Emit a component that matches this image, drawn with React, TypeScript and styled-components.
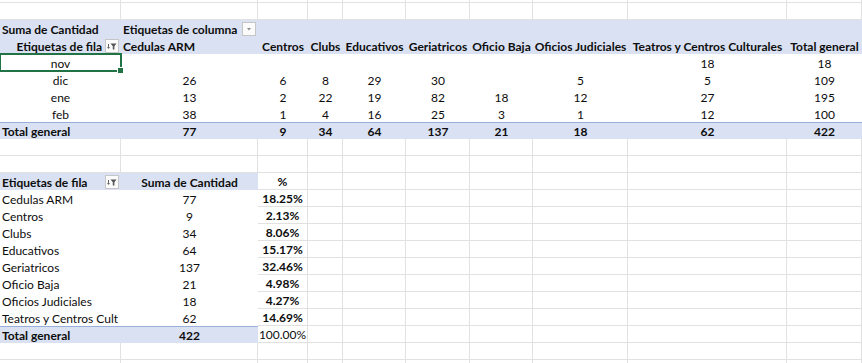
import React from "react";
import styled, { createGlobalStyle, css } from "styled-components";

const GlobalStyle = createGlobalStyle`
  body {
    margin: 0;
    background: #ffffff;
    overflow: hidden;
  }
`;

const COL_WIDTHS = [121, 137, 50, 35, 63, 64, 63, 95, 159, 75];
const GRID_LINE = "#e1e1e1";
const BAND = "#d9e1f2";

const Sheet = styled.div`
  display: grid;
  grid-template-columns: ${COL_WIDTHS.map((w) => `${w}px`).join(" ")};
  grid-template-rows: 3px repeat(22, 17px);
  font-family: "Lato", "Liberation Sans", sans-serif;
  font-size: 12px;
  color: #0d0d0d;
`;

type Align = "left" | "center" | "right";

interface CellProps {
  $align?: Align;
  $bold?: boolean;
  $band?: boolean;
  $grid?: boolean;
  $topLine?: boolean;
  $clip?: boolean;
  $selected?: boolean;
}

const justify = (a?: Align) =>
  a === "center" ? "center" : a === "right" ? "flex-end" : "flex-start";

const Cell = styled.div<CellProps>`
  box-sizing: border-box;
  display: flex;
  align-items: center;
  justify-content: ${({ $align }) => justify($align)};
  padding: 1px 2px 0;
  white-space: nowrap;
  font-weight: ${({ $bold }) => ($bold ? 700 : 400)};
  background: ${({ $band }) => ($band ? BAND : "#ffffff")};
  border-right: ${({ $grid }) => ($grid ? `1px solid ${GRID_LINE}` : "none")};
  border-bottom: ${({ $grid }) => ($grid ? `1px solid ${GRID_LINE}` : "none")};
  border-top: ${({ $topLine }) => ($topLine ? "1px solid #98afdc" : "none")};
  overflow: ${({ $clip }) => ($clip ? "hidden" : "visible")};
  ${({ $selected }) =>
    $selected &&
    css`
      position: relative;
      outline: 2px solid #217346;
      outline-offset: -1px;
      &::after {
        content: "";
        position: absolute;
        right: -3px;
        bottom: -3px;
        width: 5px;
        height: 5px;
        background: #217346;
        border: 1px solid #ffffff;
      }
    `}
`;

const HeaderWithButton = styled.div<{ $align?: Align }>`
  display: flex;
  align-items: center;
  width: 100%;
  gap: 3px;
  justify-content: ${({ $align }) => ($align === "right" ? "flex-end" : "space-between")};
`;

const PivotButton = styled.span`
  box-sizing: border-box;
  width: 14px;
  height: 14px;
  flex: none;
  display: flex;
  align-items: center;
  justify-content: center;
  background: #fbfbfb;
  border: 1px solid #c6c6c6;
`;

const FilterIcon = () => (
  <svg width="12" height="12" viewBox="0 0 12 12">
    <line x1="2.5" y1="4" x2="2.5" y2="8" stroke="#666" strokeWidth="1" />
    <polygon points="1,7 4,7 2.5,9" fill="#666" />
    <polygon points="4.5,3.5 10.5,3.5 8.4,6.2 8.4,9.5 6.8,9.5 6.8,6.2" fill="#555" />
  </svg>
);

const DropIcon = () => (
  <svg width="12" height="12" viewBox="0 0 12 12">
    <polygon points="4,5 8,5 6,7.5" fill="#8a8a8a" />
  </svg>
);

interface CellSpec {
  text?: React.ReactNode;
  align?: Align;
  bold?: boolean;
  band?: boolean;
  grid?: boolean;
  topLine?: boolean;
  clip?: boolean;
  selected?: boolean;
  button?: "filter" | "drop";
}

const blankRow = (): CellSpec[] => COL_WIDTHS.map(() => ({ grid: true }));

const topHeaders = [
  "Centros",
  "Clubs",
  "Educativos",
  "Geriatricos",
  "Oficio Baja",
  "Oficios Judiciales",
  "Teatros y Centros Culturales",
  "Total general",
];

const topData: [string, (number | null)[]][] = [
  ["nov", [null, null, null, null, null, null, null, 18, 18]],
  ["dic", [26, 6, 8, 29, 30, null, 5, 5, 109]],
  ["ene", [13, 2, 22, 19, 82, 18, 12, 27, 195]],
  ["feb", [38, 1, 4, 16, 25, 3, 1, 12, 100]],
];
const topTotals = [77, 9, 34, 64, 137, 21, 18, 62, 422];

// the label column is too narrow for the last name, so Excel cuts it short
const bottomData: [string, number, string][] = [
  ["Cedulas ARM", 77, "18.25%"],
  ["Centros", 9, "2.13%"],
  ["Clubs", 34, "8.06%"],
  ["Educativos", 64, "15.17%"],
  ["Geriatricos", 137, "32.46%"],
  ["Oficio Baja", 21, "4.98%"],
  ["Oficios Judiciales", 18, "4.27%"],
  ["Teatros y Centros Cult", 62, "14.69%"],
];

function buildRows(): CellSpec[][] {
  const rows: CellSpec[][] = [];
  rows.push(blankRow());
  rows.push(blankRow());

  // pivot 1 header rows
  rows.push([
    { text: "Suma de Cantidad", bold: true, band: true },
    { text: "Etiquetas de columna", bold: true, band: true, button: "drop" },
    ...topHeaders.map(() => ({ band: true })),
  ]);
  rows.push([
    { text: "Etiquetas de fila", bold: true, band: true, button: "filter", align: "right" },
    { text: "Cedulas ARM", bold: true, band: true },
    ...topHeaders.map((h) => ({ text: h, bold: true, band: true, align: "center" as Align })),
  ]);
  topData.forEach(([month, values], i) => {
    rows.push([
      { text: month, align: "center", selected: i === 0 },
      ...values.map((v) => ({ text: v ?? "", align: "center" as Align })),
    ]);
  });
  rows.push([
    { text: "Total general", bold: true, band: true, topLine: true },
    ...topTotals.map((v) => ({
      text: v,
      bold: true,
      band: true,
      topLine: true,
      align: "center" as Align,
    })),
  ]);

  rows.push(blankRow());
  rows.push(blankRow());

  // pivot 2
  rows.push([
    { text: "Etiquetas de fila", bold: true, band: true, button: "filter" },
    { text: "Suma de Cantidad", bold: true, band: true, align: "center" },
    { text: "%", bold: true, align: "center", grid: true },
    ...blankRow().slice(3),
  ]);
  bottomData.forEach(([label, qty, pct]) => {
    rows.push([
      { text: label, clip: true },
      { text: qty, align: "center" },
      { text: pct, bold: true, align: "center", grid: true },
      ...blankRow().slice(3),
    ]);
  });
  rows.push([
    { text: "Total general", bold: true, band: true, topLine: true },
    { text: 422, bold: true, band: true, topLine: true, align: "center" },
    { text: "100.00%", align: "center", grid: true },
    ...blankRow().slice(3),
  ]);

  rows.push(blankRow());
  rows.push(blankRow());
  return rows;
}

export default function App() {
  const rows = buildRows();
  return (
    <>
      <GlobalStyle />
      <Sheet>
        {rows.map((row, r) =>
          row.map((cell, c) => (
            <Cell
              key={`${r}-${c}`}
              $align={cell.align}
              $bold={cell.bold}
              $band={cell.band}
              $grid={cell.grid}
              $topLine={cell.topLine}
              $clip={cell.clip}
              $selected={cell.selected}
            >
              {cell.button ? (
                <HeaderWithButton $align={cell.align}>
                  <span>{cell.text}</span>
                  <PivotButton>{cell.button === "filter" ? <FilterIcon /> : <DropIcon />}</PivotButton>
                </HeaderWithButton>
              ) : (
                cell.text
              )}
            </Cell>
          ))
        )}
      </Sheet>
    </>
  );
}
